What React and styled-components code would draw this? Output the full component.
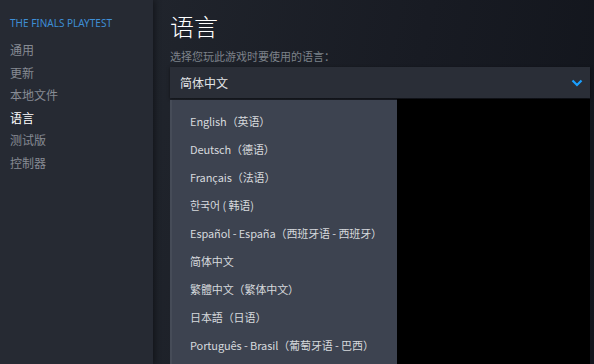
import styled, { createGlobalStyle } from "styled-components";

const GlobalStyle = createGlobalStyle`
  html, body {
    margin: 0;
    padding: 0;
    background: #000;
  }
  body {
    font-family: "Noto Sans CJK SC", "Noto Sans", sans-serif;
  }
`;

const navItems = ["通用", "更新", "本地文件", "语言", "测试版", "控制器"];

const languages = [
  "English（英语）",
  "Deutsch（德语）",
  "Français（法语）",
  "한국어 ( 韩语)",
  "Español - España（西班牙语 - 西班牙）",
  "简体中文",
  "繁體中文（繁体中文）",
  "日本語（日语）",
  "Português - Brasil（葡萄牙语 - 巴西）",
];

export default function App() {
  return (
    <Page>
      <GlobalStyle />
      <Sidebar>
        <GameTitle>The Finals Playtest</GameTitle>
        <NavList>
          {navItems.map((item) => (
            <NavItem key={item} active={item === "语言"}>
              {item}
            </NavItem>
          ))}
        </NavList>
      </Sidebar>
      <Main>
        <Heading>语言</Heading>
        <Hint>选择您玩此游戏时要使用的语言：</Hint>
        <Select>
          <span>简体中文</span>
          <svg width="12" height="8" viewBox="0 0 12 8">
            <path d="M1.5 1.5 L6 6 L10.5 1.5" stroke="#1a9fff" strokeWidth="2.2" fill="none" />
          </svg>
        </Select>
        <Below>
          <Menu>
            {languages.map((lang) => (
              <MenuItem key={lang}>{lang}</MenuItem>
            ))}
          </Menu>
          <Blank />
        </Below>
      </Main>
    </Page>
  );
}

const Page = styled.div`
  display: flex;
  width: 594px;
  height: 364px;
  overflow: hidden;
`;

const Sidebar = styled.div`
  width: 153px;
  flex-shrink: 0;
  background: #262a33;
  padding: 16px 0 0 10px;
  box-sizing: border-box;
  box-shadow: 2px 0 6px rgba(0, 0, 0, 0.4);
  z-index: 1;
`;

const GameTitle = styled.div`
  font-family: "Noto Sans", sans-serif;
  font-size: 10px;
  text-transform: uppercase;
  color: #3e8ed6;
  height: 15px;
  line-height: 15px;
`;

const NavList = styled.div`
  display: flex;
  flex-direction: column;
  margin-top: 8px;
`;

const NavItem = styled.div`
  font-size: 12px;
  line-height: 22.5px;
  height: 22.5px;
  color: ${(p) => (p.active ? "#ffffff" : "#868b93")};
`;

const Main = styled.div`
  flex: 1;
  display: flex;
  flex-direction: column;
  padding: 9px 4px 0 17px;
  background: linear-gradient(100deg, #20242c 0%, #181b23 55%, #12151c 100%);
`;

const Heading = styled.div`
  font-size: 24px;
  color: #ffffff;
  line-height: 34px;
  height: 34px;
  font-weight: 300;
`;

const Hint = styled.div`
  font-size: 11px;
  color: #7d828a;
  line-height: 16px;
  margin-top: 5px;
  height: 19px;
`;

const Select = styled.div`
  height: 31px;
  display: flex;
  align-items: center;
  justify-content: space-between;
  padding: 0 7px 0 10px;
  background: #2a2e37;
  box-shadow: 0 1px 3px rgba(0, 0, 0, 0.5);
  font-size: 12px;
  color: #e4e6e8;
`;

const Below = styled.div`
  flex: 1;
  display: flex;
  margin-top: 1px;
`;

const Menu = styled.div`
  width: 227px;
  margin-top: 1px;
  background: #3d4350;
  border-left: 2px solid #464c58;
  padding: 7px 0 0 18px;
  box-sizing: border-box;
  display: flex;
  flex-direction: column;
`;

const MenuItem = styled.div`
  font-size: 11px;
  line-height: 28px;
  height: 28px;
  color: #d6d9dd;
  white-space: nowrap;
  letter-spacing: -0.1px;
`;

const Blank = styled.div`
  flex: 1;
  background: #000;
`;
